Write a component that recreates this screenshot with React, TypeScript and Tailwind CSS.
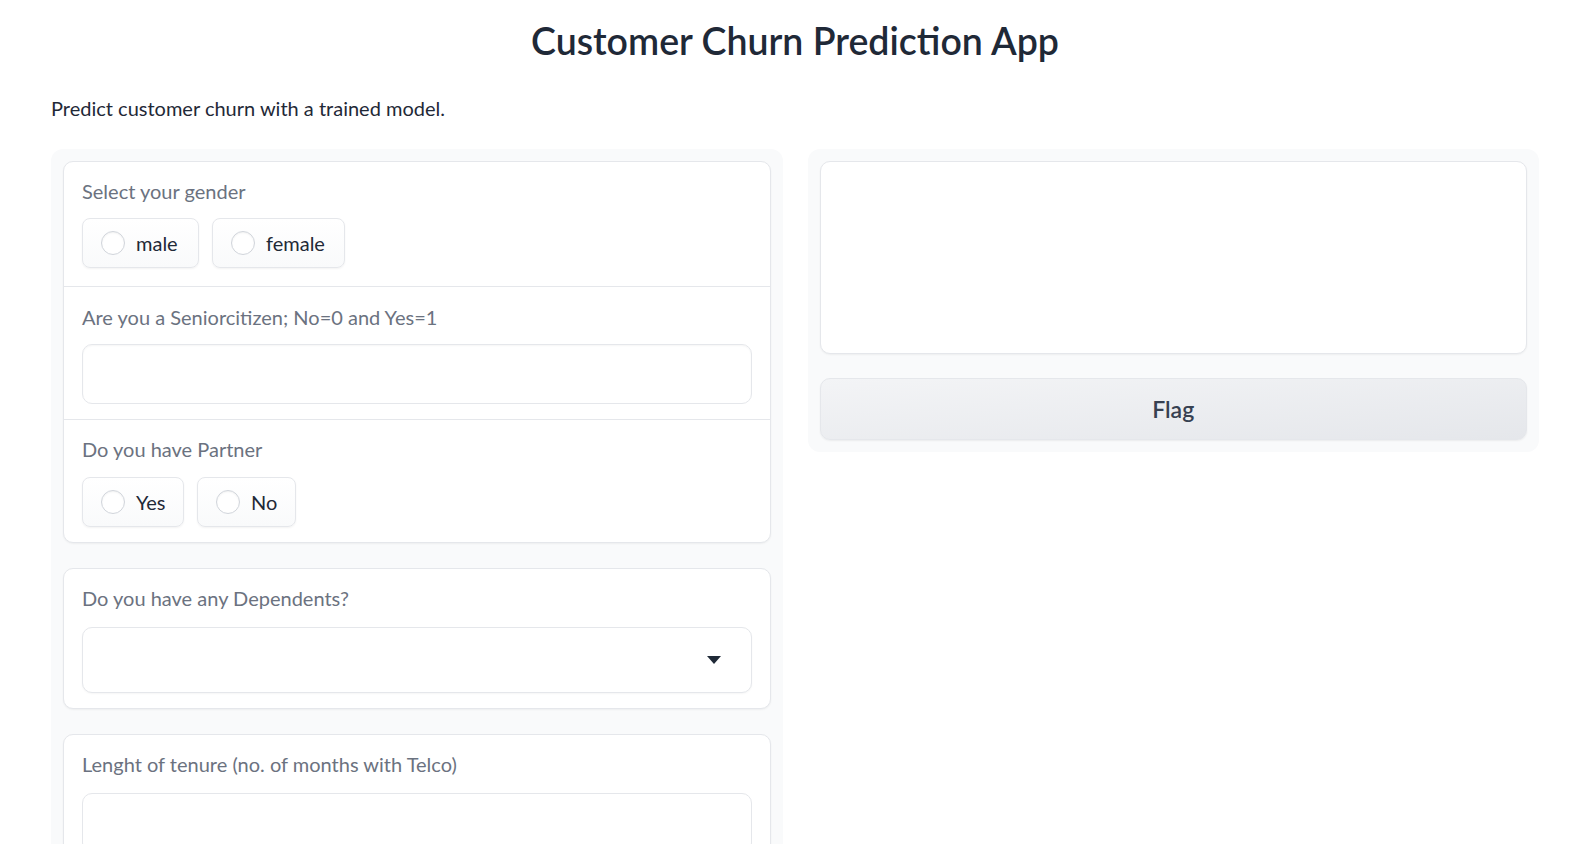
import React from "react";

const font = { fontFamily: "Lato, 'Noto Sans', sans-serif" };

function Radio({ label, w }: { label: string; w: string }) {
  return (
    <div className={`flex h-[50px] items-center gap-[11px] rounded-[8px] border border-[#e5e7eb] bg-gradient-to-b from-white to-[#f9fafb] pl-[18px] shadow-[0_1px_2px_rgba(0,0,0,0.05)] ${w}`}>
      <span className="h-[24px] w-[24px] rounded-full border border-[#d1d5db] bg-white shadow-[inset_0_1px_2px_rgba(0,0,0,0.06)]" />
      <span className="text-[20px] text-[#1f2937]">{label}</span>
    </div>
  );
}

export default function App() {
  return (
    <div className="min-h-screen bg-white text-[#1f2937]" style={font}>
      <div className="pl-[51px] pr-[34px]">
        <h1 className="pt-[17px] text-center text-[37.5px] font-semibold leading-[48px] text-[#1f2937]">
          Customer Churn Prediction App
        </h1>
        <p className="mt-[30px] text-[20px] leading-[26px] text-[#1f2937]">
          Predict customer churn with a trained model.
        </p>
        <div className="mt-[28px] flex items-start gap-[25px]">
          {/* left */}
          <div className="flex flex-1 flex-col gap-[25px] rounded-[12px] bg-[#f9fafb] p-[12px]">
            <div className="rounded-[10px] border border-[#e5e7eb] bg-white shadow-[0_1px_2px_rgba(0,0,0,0.05)]">
              <div className="border-b border-[#e5e7eb] px-[18px] pb-[18px] pt-[16px]">
                <div className="text-[20px] leading-[26px] text-[#6b7280]">Select your gender</div>
                <div className="mt-[14px] flex gap-[13px]">
                  <Radio label="male" w="w-[117px]" />
                  <Radio label="female" w="w-[133px]" />
                </div>
              </div>
              <div className="border-b border-[#e5e7eb] px-[18px] pb-[15px] pt-[17px]">
                <div className="text-[20px] leading-[26px] text-[#6b7280]">Are you a Seniorcitizen; No=0 and Yes=1</div>
                <div className="mt-[14px] h-[60px] rounded-[10px] border border-[#e5e7eb] bg-white shadow-[inset_0_1px_2px_rgba(0,0,0,0.04)]" />
              </div>
              <div className="px-[18px] pb-[15px] pt-[16px]">
                <div className="text-[20px] leading-[26px] text-[#6b7280]">Do you have Partner</div>
                <div className="mt-[15px] flex gap-[13px]">
                  <Radio label="Yes" w="w-[102px]" />
                  <Radio label="No" w="w-[99px]" />
                </div>
              </div>
            </div>
            <div className="rounded-[10px] border border-[#e5e7eb] bg-white px-[18px] pb-[15px] pt-[16px] shadow-[0_1px_2px_rgba(0,0,0,0.05)]">
              <div className="text-[20px] leading-[26px] text-[#6b7280]">Do you have any Dependents?</div>
              <div className="mt-[16px] flex h-[66px] items-center justify-end rounded-[10px] border border-[#e5e7eb] bg-white pr-[30px] shadow-[0_1px_2px_rgba(0,0,0,0.04)]">
                <svg width="14" height="8" viewBox="0 0 14 8">
                  <path d="M0 0 L14 0 L7 8 Z" fill="#1f2937" />
                </svg>
              </div>
            </div>
            <div className="rounded-[10px] border border-[#e5e7eb] bg-white px-[18px] pb-[15px] pt-[16px] shadow-[0_1px_2px_rgba(0,0,0,0.05)]">
              <div className="text-[20px] leading-[26px] text-[#6b7280]">Lenght of tenure (no. of months with Telco)</div>
              <div className="mt-[16px] h-[60px] rounded-[10px] border border-[#e5e7eb] bg-white" />
            </div>
          </div>
          {/* right */}
          <div className="flex flex-1 flex-col gap-[24px] rounded-[12px] bg-[#f9fafb] p-[12px]">
            <div className="h-[193px] rounded-[10px] border border-[#e5e7eb] bg-white shadow-[0_1px_2px_rgba(0,0,0,0.05)]" />
            <button className="h-[62px] rounded-[10px] border border-[#e5e7eb] bg-gradient-to-br from-[#f3f4f6] to-[#e5e7eb] text-[23px] font-semibold text-[#374151] shadow-[0_1px_2px_rgba(0,0,0,0.06)]">
              Flag
            </button>
          </div>
        </div>
      </div>
    </div>
  );
}
